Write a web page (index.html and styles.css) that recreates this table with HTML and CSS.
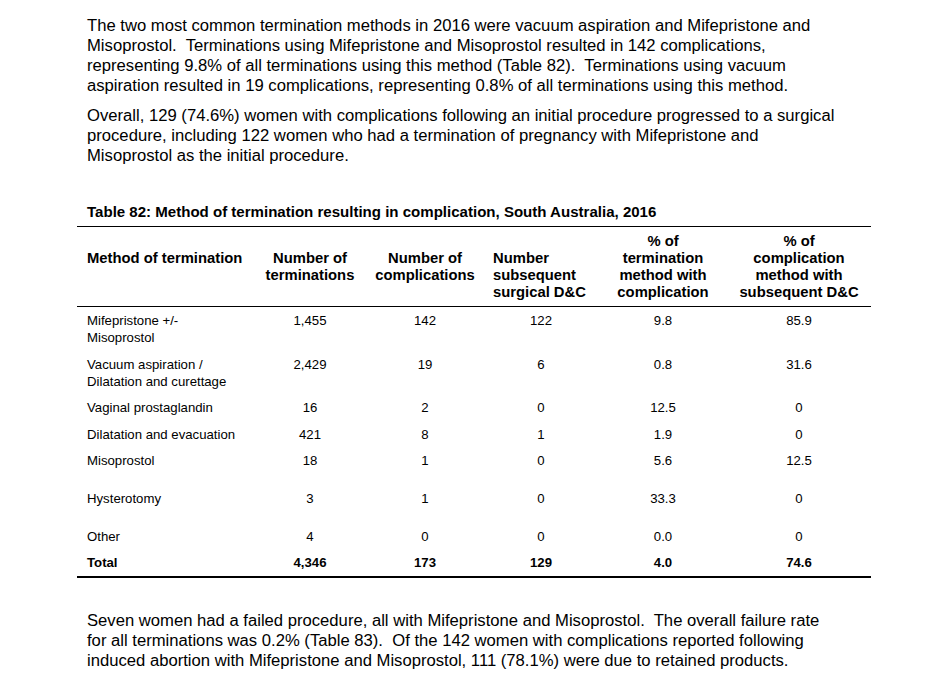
FILE: index.html
```html
<!DOCTYPE html>
<html lang="en">
<head>
<meta charset="utf-8">
<title>Table 82</title>
<link rel="stylesheet" href="styles.css">
</head>
<body>
<main class="page">
  <p class="para para-first">The two most common termination methods in 2016 were vacuum aspiration and Mifepristone and<br>Misoprostol.&nbsp; Terminations using Mifepristone and Misoprostol resulted in 142 complications,<br>representing 9.8% of all terminations using this method (Table 82).&nbsp; Terminations using vacuum<br>aspiration resulted in 19 complications, representing 0.8% of all terminations using this method.</p>
  <p class="para">Overall, 129 (74.6%) women with complications following an initial procedure progressed to a surgical<br>procedure, including 122 women who had a termination of pregnancy with Mifepristone and<br>Misoprostol as the initial procedure.</p>

  <h2 class="caption">Table 82: Method of termination resulting in complication, South Australia, 2016</h2>
  <table class="data">
    <colgroup>
      <col class="c1"><col class="c2"><col class="c3"><col class="c4"><col class="c5"><col class="c6">
    </colgroup>
    <thead>
      <tr>
        <th class="left push">Method of termination</th>
        <th class="push">Number of<br>terminations</th>
        <th class="push">Number of<br>complications</th>
        <th class="left push">Number<br>subsequent<br>surgical D&amp;C</th>
        <th>% of<br>termination<br>method with<br>complication</th>
        <th>% of<br>complication<br>method with<br>subsequent D&amp;C</th>
      </tr>
    </thead>
    <tbody>
      <tr><td class="left">Mifepristone +/-<br>Misoprostol</td><td>1,455</td><td>142</td><td>122</td><td>9.8</td><td>85.9</td></tr>
      <tr><td class="left">Vacuum aspiration /<br>Dilatation and curettage</td><td>2,429</td><td>19</td><td>6</td><td>0.8</td><td>31.6</td></tr>
      <tr><td class="left">Vaginal prostaglandin</td><td>16</td><td>2</td><td>0</td><td>12.5</td><td>0</td></tr>
      <tr><td class="left">Dilatation and evacuation</td><td>421</td><td>8</td><td>1</td><td>1.9</td><td>0</td></tr>
      <tr class="tall"><td class="left">Misoprostol</td><td>18</td><td>1</td><td>0</td><td>5.6</td><td>12.5</td></tr>
      <tr class="tall2"><td class="left">Hysterotomy</td><td>3</td><td>1</td><td>0</td><td>33.3</td><td>0</td></tr>
      <tr><td class="left">Other</td><td>4</td><td>0</td><td>0</td><td>0.0</td><td>0</td></tr>
      <tr class="total"><td class="left">Total</td><td>4,346</td><td>173</td><td>129</td><td>4.0</td><td>74.6</td></tr>
    </tbody>
  </table>

  <p class="para para-after">Seven women had a failed procedure, all with Mifepristone and Misoprostol.&nbsp; The overall failure rate<br>for all terminations was 0.2% (Table 83).&nbsp; Of the 142 women with complications reported following<br>induced abortion with Mifepristone and Misoprostol, 111 (78.1%) were due to retained products.</p>
</main>
</body>
</html>
```

FILE: styles.css
```css
html, body {
  margin: 0;
  padding: 0;
  background: #ffffff;
}

body {
  font-family: "Liberation Sans", Arial, sans-serif;
  color: #000000;
}

.page {
  width: 942px;
  padding: 16px 0 0 0;
  box-sizing: border-box;
}

.para {
  margin: 0 0 10px 87px;
  font-size: 16.65px;
  line-height: 20px;
  white-space: nowrap;
}

.para-first {
  margin-top: 0;
}

.caption {
  margin: 37px 0 0 87px;
  font-size: 15.05px;
  line-height: 17px;
  font-weight: bold;
  height: 17px;
  padding-bottom: 6px;
}

.data {
  margin-left: 77px;
  width: 794px;
  border-collapse: collapse;
  table-layout: fixed;
  border-top: 1px solid #000;
  border-bottom: 2px solid #000;
}

.c1 { width: 176px; }
.c2 { width: 114px; }
.c3 { width: 116px; }
.c4 { width: 116px; }
.c5 { width: 128px; }
.c6 { width: 144px; }

.data th {
  font-size: 14.8px;
  line-height: 17px;
  font-weight: bold;
  text-align: center;
  vertical-align: top;
  padding: 6px 0 5px 0;
  border-bottom: 1px solid #000;
  white-space: nowrap;
}

.data th.push {
  padding-top: 23px;
}

.data th.left {
  text-align: left;
  padding-left: 10px;
}

.data td {
  font-size: 13.2px;
  line-height: 17px;
  text-align: center;
  vertical-align: top;
  padding: 5px 0 4.5px 0;
  white-space: nowrap;
}

.data td.left {
  text-align: left;
  padding-left: 10px;
}

.data tr.tall td {
  padding-bottom: 16px;
}

.data tr.tall2 td {
  padding-bottom: 15.5px;
}

.data tr.total td {
  font-weight: bold;
}

.para-after {
  margin-top: 33px;
}
```
